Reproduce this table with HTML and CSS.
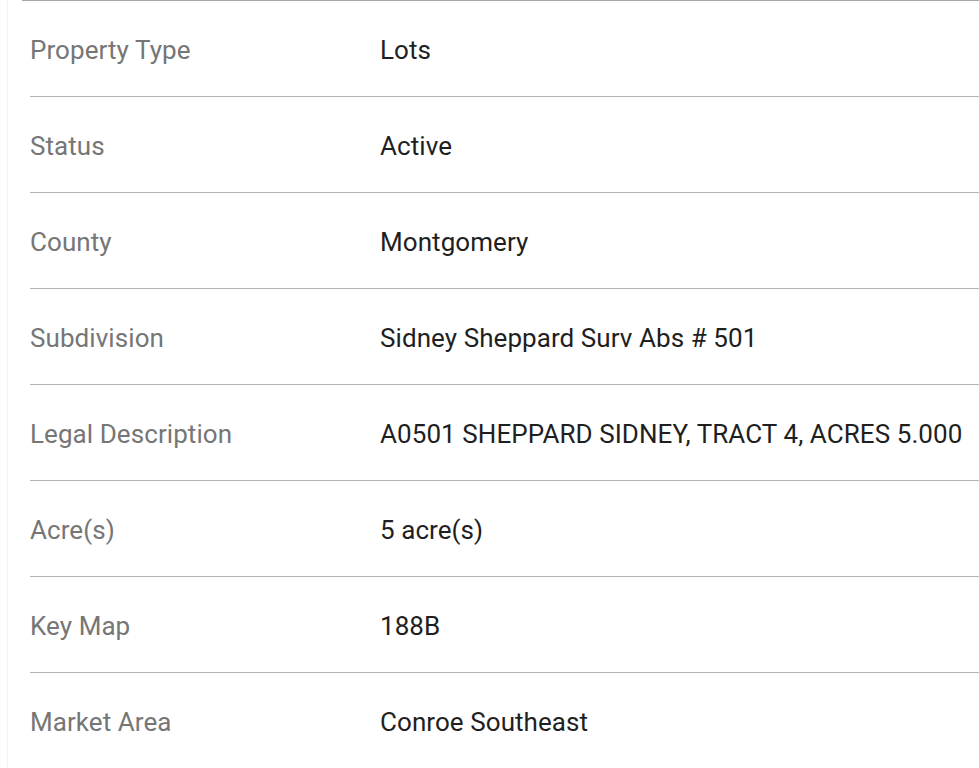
FILE: index.html
```html
<!DOCTYPE html>
<html>
<head>
<meta charset="utf-8">
<link rel="stylesheet" href="styles.css">
</head>
<body>
<div class="page">
<div class="top-rule"></div>
<div class="list">
  <div class="row"><div class="label">Property Type</div><div class="value">Lots</div></div>
  <div class="row"><div class="label">Status</div><div class="value">Active</div></div>
  <div class="row"><div class="label">County</div><div class="value">Montgomery</div></div>
  <div class="row"><div class="label">Subdivision</div><div class="value">Sidney Sheppard Surv Abs # 501</div></div>
  <div class="row"><div class="label">Legal Description</div><div class="value">A0501 SHEPPARD SIDNEY, TRACT 4, ACRES 5.000</div></div>
  <div class="row"><div class="label">Acre(s)</div><div class="value">5 acre(s)</div></div>
  <div class="row"><div class="label">Key Map</div><div class="value">188B</div></div>
  <div class="row last"><div class="label">Market Area</div><div class="value">Conroe Southeast</div></div>
</div>
</div>
</body>
</html>
```
FILE: styles.css
```css
html, body {
  margin: 0;
  padding: 0;
  background: #ffffff;
  overflow: hidden;
}
body {
  font-family: Roboto, "Noto Sans", sans-serif;
  width: 979px;
  height: 768px;
}
.page {
  margin-left: 7px;
  border-left: 1px solid #f3f3f3;
  height: 768px;
}
.top-rule {
  margin-left: 14px;
  height: 1px;
  background: #a8a8a8;
}
.list {
  margin-left: 22px;
}
.row {
  display: grid;
  grid-template-columns: 350px 1fr;
  align-items: center;
  height: 96px;
  padding-top: 2px;
  box-sizing: border-box;
  border-bottom: 1px solid #b4b4b4;
  white-space: nowrap;
  letter-spacing: 0.07px;
}
.row.last {
  border-bottom: none;
}
.label {
  font-size: 26px;
  color: #767676;
}
.value {
  font-size: 26px;
  color: #1f1f1f;
}
```
